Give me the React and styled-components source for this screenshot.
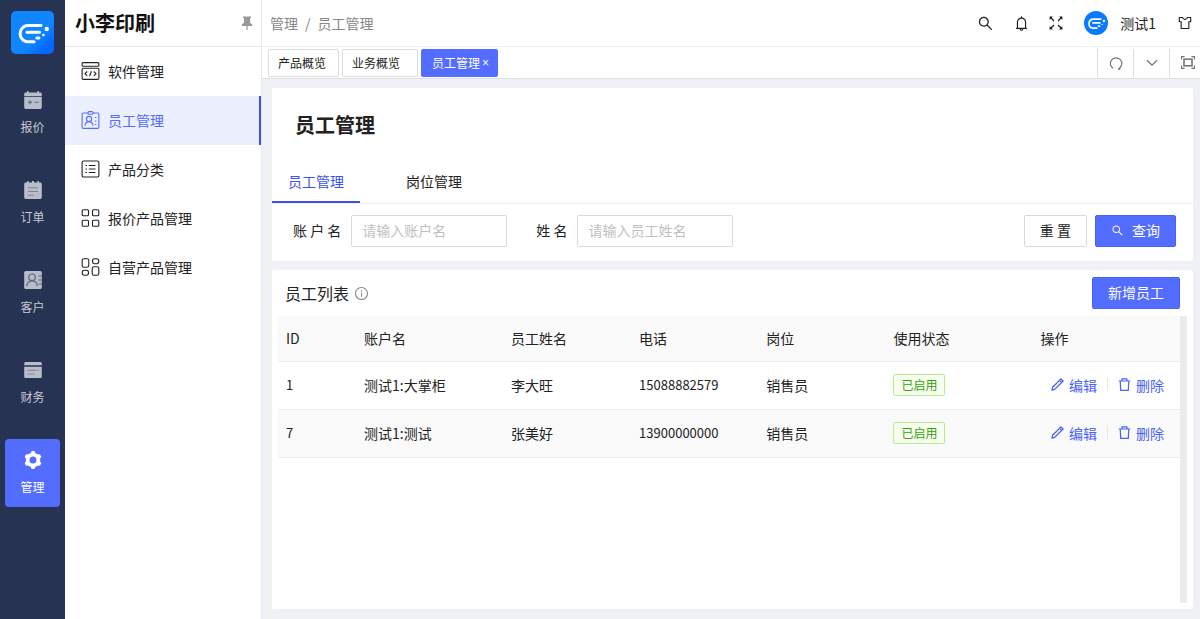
import React, { useState } from 'react';
import styled, { createGlobalStyle } from 'styled-components';
import {
  AiOutlineBell,
  AiOutlineInfoCircle,
  AiOutlineSearch,
  AiOutlineSkin,
} from 'react-icons/ai';

/* ---------- icons ---------- */

const BrandMark = ({ size }) => (
  <svg width={size} height={size} viewBox="0 0 43 43" fill="none" stroke="#fff" strokeLinecap="round">
    <path d="M30 14.6H16a8.2 8.2 0 0 0 0 16.2h7" strokeWidth="3" />
    <path d="M16 21.2h12.5" strokeWidth="3" />
    <path d="M26 27h1.8" strokeWidth="3.2" />
    <circle cx="32.4" cy="24" r="1.3" fill="#fff" stroke="none" />
    <circle cx="35.8" cy="18" r="2.2" fill="#fff" stroke="none" />
  </svg>
);

const QuoteIcon = () => (
  <svg width="20" height="20" viewBox="0 0 20 20" fill="#b9bdc9">
    <path d="M4 1h1.6v1.6h8.8V1H16v1.6h1.2c.9 0 1.6.6 1.6 1.5v1.8H1.2V4.1c0-.9.7-1.5 1.6-1.5H4z" />
    <path d="M1.2 6.7h17.6v10.6c0 .9-.7 1.6-1.6 1.6H2.8c-.9 0-1.6-.7-1.6-1.6z" />
    <path d="M5 12.3h4M7 10.3v4M11.8 12.3h4" stroke="#5c6580" strokeWidth="1.1" />
  </svg>
);

const OrderIcon = () => (
  <svg width="20" height="20" viewBox="0 0 20 20" fill="#b9bdc9">
    <path d="M4 1h1.6v1.4H9V1h2v1.4h3.4V1H16v1.4h1.2c.9 0 1.6.7 1.6 1.6v13.3c0 .9-.7 1.6-1.6 1.6H2.8c-.9 0-1.6-.7-1.6-1.6V4c0-.9.7-1.6 1.6-1.6H4z" />
    <path d="M5 7.7h10M5 11.5h10M5 15.2h6" stroke="#7d859b" strokeWidth="1.1" />
  </svg>
);

const CustomerIcon = () => (
  <svg width="20" height="20" viewBox="0 0 20 20" fill="none">
    <rect x="1.2" y="1" width="17.6" height="18" rx="1.6" fill="#b9bdc9" />
    <circle cx="9" cy="7.3" r="3.3" stroke="#5c6580" strokeWidth="1.2" />
    <path d="M3.8 16.3c0-3.2 2-5.4 5.2-5.4s5.2 2.2 5.2 5.4" stroke="#5c6580" strokeWidth="1.2" />
    <path d="M15.3 6h3.5M15.3 10h3.5M15.3 14h3.5" stroke="#5c6580" strokeWidth="1.1" />
  </svg>
);

const FinanceIcon = () => (
  <svg width="20" height="20" viewBox="0 0 20 20" fill="#b9bdc9">
    <path d="M2.8 2h14.4c.9 0 1.6.7 1.6 1.6v1.6H1.2V3.6C1.2 2.7 1.9 2 2.8 2z" />
    <path d="M1.2 6.8h17.6v9.6c0 .9-.7 1.6-1.6 1.6H2.8c-.9 0-1.6-.7-1.6-1.6z" />
    <path d="M4.7 10.4h8.6M14.5 10.4h1.5M4.7 14h6.8" stroke="#868da1" strokeWidth="1.2" />
  </svg>
);

const GearIcon = () => (
  <svg width="20" height="20" viewBox="0 0 20 20" fill="none" stroke="#fff">
    <circle cx="10" cy="10" r="5.4" strokeWidth="3.8" />
    {[0, 60, 120, 180, 240, 300].map((deg) => (
      <path
        key={deg}
        d="M8.6 3.2 9 1.9h2l.4 1.3z"
        fill="#fff"
        strokeWidth="1.6"
        strokeLinejoin="round"
        transform={`rotate(${deg} 10 10)`}
      />
    ))}
  </svg>
);

const PinIcon = () => (
  <svg width="12" height="15" viewBox="0 0 12 15" fill="#999">
    <path d="M2 .5h8v1.6H9v4.7l2.2 1.6v1.5H6.6V14H5.4V9.9H.8V8.4L3 6.8V2.1H2z" />
  </svg>
);

const SoftwareIcon = () => (
  <MenuSvg viewBox="0 0 18 18">
    <rect x=".6" y=".6" width="16.8" height="3.6" rx="1" />
    <path d="M2 6.2h14a1.4 1.4 0 0 1 1.4 1.4V16a1.4 1.4 0 0 1-1.4 1.4H2A1.4 1.4 0 0 1 .6 16V7.6A1.4 1.4 0 0 1 2 6.2z" />
    <path d="M5.7 9.5 3.5 11.7l2.2 2.2M12.3 9.5l2.2 2.2-2.2 2.2M9.9 9.2l-1.8 5" />
  </MenuSvg>
);

const StaffIcon = () => (
  <MenuSvg viewBox="0 0 18 18">
    <path d="M6.5 2H2A1.4 1.4 0 0 0 .6 3.4V16A1.4 1.4 0 0 0 2 17.4h14a1.4 1.4 0 0 0 1.4-1.4V3.4A1.4 1.4 0 0 0 16 2h-4.5" />
    <rect x="6.5" y=".6" width="5" height="2.6" rx="1" />
    <circle cx="7.5" cy="8" r="2.6" />
    <path d="M3.5 14.8c.2-2.5 1.6-4.2 4-4.2s3.8 1.7 4 4.2" />
    <path d="M13.3 6.5h1.6M13.3 10h1.6M13.3 13.5h1.6" />
  </MenuSvg>
);

const CategoryIcon = () => (
  <MenuSvg viewBox="0 0 18 18">
    <rect x=".6" y="1" width="16.8" height="16" rx="1.5" />
    <path d="M4 5.5h1.5M4 9h1.5M4 12.5h1.5M7.3 5.5H14M7.3 9H14M7.3 12.5H14" />
  </MenuSvg>
);

const GridIcon = () => (
  <MenuSvg viewBox="0 0 18 18">
    <rect x=".7" y=".7" width="6.3" height="6" rx="1" />
    <rect x="11" y=".7" width="6.3" height="6" rx="1" />
    <rect x=".7" y="11.3" width="6.3" height="6" rx="1" />
    <rect x="11" y="11.3" width="6.3" height="6" rx="1" />
  </MenuSvg>
);

const OwnIcon = () => (
  <MenuSvg viewBox="0 0 18 18">
    <rect x=".7" y=".7" width="6.6" height="8.6" rx="1.8" />
    <rect x="11" y=".7" width="6.3" height="5" rx="2.2" />
    <rect x=".7" y="12.3" width="6.3" height="5" rx="2.2" />
    <rect x="10.7" y="8.7" width="6.6" height="8.6" rx="1.8" />
  </MenuSvg>
);

const ShrinkIcon = () => (
  <svg width="14" height="14" viewBox="0 0 14 14" fill="#222" stroke="#222" strokeWidth="1.4">
    <path d="M1.5 1.5 5 5M12.5 1.5 9 5M1.5 12.5 5 9M12.5 12.5 9 9" />
    <path d="M.6.6H4L.6 4zM13.4.6H10L13.4 4zM.6 13.4H4L.6 10zM13.4 13.4H10l3.4-3.4z" stroke="none" />
  </svg>
);

const RefreshIcon = () => (
  <svg width="14" height="14" viewBox="0 0 14 14" fill="none" stroke="#777" strokeWidth="1.2">
    <path d="M4 12.3A5.7 5.7 0 1 1 10.3 12.2" />
    <path d="M9 13h2.4" strokeWidth="1.6" />
  </svg>
);

const DownIcon = () => (
  <svg width="12" height="8" viewBox="0 0 12 8" fill="none" stroke="#777" strokeWidth="1.3">
    <path d="M1 1.2l5 5 5-5" />
  </svg>
);

const FrameIcon = () => (
  <svg width="14" height="13" viewBox="0 0 14 13" fill="none" stroke="#777">
    <rect x="3" y="3.2" width="8" height="6.6" strokeWidth="1.6" />
    <path d="M.6 3.5V.6h3M10.4.6h3v2.9M13.4 9.5v2.9h-3M3.6 12.4h-3V9.5" strokeWidth="1.2" />
  </svg>
);

const PenIcon = () => (
  <svg width="13" height="13" viewBox="0 0 13 13" fill="none" stroke="currentColor" strokeWidth="1.3" strokeLinejoin="round">
    <path d="M1 12l.6-2.8L10 .9 12.1 3l-8.4 8.4zM8.6 2.3l2.1 2.1" />
  </svg>
);

const TrashIcon = () => (
  <svg width="13" height="13" viewBox="0 0 13 13" fill="none" stroke="currentColor" strokeWidth="1.2" strokeLinejoin="round">
    <path d="M.8 3h11.4M4 3V.8h5V3M2.2 3l.5 9.4h7.6l.5-9.4" />
  </svg>
);

/* ---------- data ---------- */

const modules = [
  { label: '报价', icon: <QuoteIcon /> },
  { label: '订单', icon: <OrderIcon /> },
  { label: '客户', icon: <CustomerIcon /> },
  { label: '财务', icon: <FinanceIcon /> },
  { label: '管理', icon: <GearIcon /> },
];

const menus = [
  { label: '软件管理', icon: <SoftwareIcon /> },
  { label: '员工管理', icon: <StaffIcon /> },
  { label: '产品分类', icon: <CategoryIcon /> },
  { label: '报价产品管理', icon: <GridIcon /> },
  { label: '自营产品管理', icon: <OwnIcon /> },
];

const staff = [
  { id: 1, account: '测试1:大掌柜', name: '李大旺', phone: '15088882579', post: '销售员' },
  { id: 7, account: '测试1:测试', name: '张美好', phone: '13900000000', post: '销售员' },
];

const App = () => {
  const [tab, setTab] = useState('员工管理');

  return (
    <Page>
      <GlobalStyle />
      <Rail>
        <Logo><BrandMark size={43} /></Logo>
        {modules.map((m) => (
          <RailItem key={m.label} href="#" $active={m.label === '管理'}>
            {m.icon}
            <span>{m.label}</span>
          </RailItem>
        ))}
      </Rail>

      <Side>
        <SideHeader>
          <Company>小李印刷</Company>
          <PinIcon />
        </SideHeader>
        {menus.map((m) => (
          <MenuItem key={m.label} href="#" $active={m.label === '员工管理'}>
            {m.icon}
            {m.label}
          </MenuItem>
        ))}
      </Side>

      <Main>
        <Header>
          <Crumbs>
            <span>管理</span>
            <span>/</span>
            <span>员工管理</span>
          </Crumbs>
          <HeaderTools>
            <IconButton aria-label="搜索"><AiOutlineSearch size={17} /></IconButton>
            <IconButton aria-label="通知"><AiOutlineBell size={17} /></IconButton>
            <IconButton aria-label="全屏"><ShrinkIcon /></IconButton>
            <User>
              <Avatar><BrandMark size={24} /></Avatar>
              测试1
            </User>
            <IconButton aria-label="主题"><AiOutlineSkin size={16} /></IconButton>
          </HeaderTools>
        </Header>

        <PageTabs>
          <PageTab>产品概览</PageTab>
          <PageTab $wide>业务概览</PageTab>
          <PageTab $active>员工管理<Close>×</Close></PageTab>
          <TabTools>
            <TabTool aria-label="刷新"><RefreshIcon /></TabTool>
            <TabTool aria-label="更多"><DownIcon /></TabTool>
            <TabTool aria-label="内容全屏"><FrameIcon /></TabTool>
          </TabTools>
        </PageTabs>

        <Content>
          <Card>
            <Title>员工管理</Title>
            <Tabs>
              {['员工管理', '岗位管理'].map((t) => (
                <Tab key={t} $active={t === tab} onClick={() => setTab(t)}>{t}</Tab>
              ))}
            </Tabs>
            <Filters>
              <Field>
                <label htmlFor="account">账 户 名</label>
                <Input id="account" placeholder="请输入账户名" />
              </Field>
              <Field>
                <label htmlFor="name">姓 名</label>
                <Input id="name" placeholder="请输入员工姓名" />
              </Field>
              <Actions>
                <Button>重 置</Button>
                <Button $primary><AiOutlineSearch size={13} />查询</Button>
              </Actions>
            </Filters>
          </Card>

          <ListCard>
            <ListHeader>
              <ListTitle>员工列表</ListTitle>
              <AiOutlineInfoCircle size={15} color="#888" />
              <Actions><Button $primary>新增员工</Button></Actions>
            </ListHeader>
            <TableArea>
              <div>
                <Table>
                  <colgroup>
                    <Col $width="78px" />
                    <Col $width="16.3%" />
                    <Col $width="14.2%" />
                    <Col $width="14.1%" />
                    <Col $width="14.1%" />
                    <Col $width="16.3%" />
                    <Col />
                  </colgroup>
                  <thead>
                    <tr>
                      <th>ID</th>
                      <th>账户名</th>
                      <th>员工姓名</th>
                      <th>电话</th>
                      <th>岗位</th>
                      <th>使用状态</th>
                      <th>操作</th>
                    </tr>
                  </thead>
                  <tbody>
                    {staff.map((s) => (
                      <tr key={s.id}>
                        <NumberCell>{s.id}</NumberCell>
                        <td>{s.account}</td>
                        <td>{s.name}</td>
                        <NumberCell>{s.phone}</NumberCell>
                        <td>{s.post}</td>
                        <td><Tag>已启用</Tag></td>
                        <td>
                          <RowActions>
                            <RowLink href="#"><PenIcon />编辑</RowLink>
                            <Divider />
                            <RowLink href="#"><TrashIcon />删除</RowLink>
                          </RowActions>
                        </td>
                      </tr>
                    ))}
                  </tbody>
                </Table>
              </div>
              <Track />
            </TableArea>
          </ListCard>
        </Content>
      </Main>
    </Page>
  );
};

/* ---------- styles ---------- */

const GlobalStyle = createGlobalStyle`
  * { box-sizing: border-box; }
  body {
    margin: 0;
    color: #222;
    font: 14px/20px "Noto Sans CJK SC", sans-serif;
  }
  button, input { font: inherit; color: inherit; }
  button { cursor: pointer; }
  a { color: inherit; text-decoration: none; }
  svg { flex: none; }
`;

const Page = styled.div`
  display: flex;
  min-height: 100vh;
  overflow: hidden;
`;

const Rail = styled.nav`
  display: flex;
  flex-direction: column;
  flex: none;
  gap: 22px;
  width: 65px;
  padding: 11px 5px;
  background: #273352;
`;

const Logo = styled.div`
  width: 43px;
  height: 43px;
  margin: 0 6px 3px;
  border-radius: 5px;
  background: linear-gradient(135deg, #0f85ff 0 60%, #0567ff 85%);
`;

const RailItem = styled.a`
  display: flex;
  flex-direction: column;
  align-items: center;
  gap: 7px;
  height: 68px;
  padding-top: 11px;
  border-radius: 4px;
  font-size: 12px;
  color: ${(p) => (p.$active ? '#fff' : '#c6cad3')};
  background: ${(p) => (p.$active ? '#526dff' : 'transparent')};
`;

const Side = styled.aside`
  flex: none;
  width: 197px;
  background: #fff;
  border-right: 1px solid #e8eaef;
`;

const SideHeader = styled.div`
  display: flex;
  align-items: center;
  justify-content: space-between;
  height: 47px;
  padding: 0 8px 0 10px;
  border-bottom: 1px solid #e8e8e8;
`;

const Company = styled.strong`
  font-size: 20px;
  line-height: 28px;
  font-weight: 700;
  color: #111;
`;

const MenuItem = styled.a`
  display: flex;
  align-items: center;
  gap: 8px;
  height: 49px;
  padding: 0 0 2px 16px;
  color: ${(p) => (p.$active ? '#526dff' : '#222')};
  background: ${(p) => (p.$active ? '#eceffe' : 'transparent')};
  border-right: 2px solid ${(p) => (p.$active ? '#3c50f5' : 'transparent')};
`;

const MenuSvg = styled.svg`
  width: 19px;
  height: 18px;
  fill: none;
  stroke: currentColor;
  stroke-width: 1.1;
`;

const Main = styled.main`
  display: flex;
  flex-direction: column;
  flex: 1;
  min-width: 0;
  background: #f0f1f5;
`;

const Header = styled.header`
  display: flex;
  align-items: center;
  justify-content: space-between;
  height: 47px;
  padding: 0 7px 0 8px;
  background: #fff;
  border-bottom: 1px solid #eee;
`;

const Crumbs = styled.div`
  display: flex;
  gap: 7px;
  color: #888;
`;

const HeaderTools = styled.div`
  display: flex;
  align-items: center;
  gap: 19px;
`;

const IconButton = styled.button`
  display: flex;
  padding: 0;
  border: 0;
  background: none;
`;

const User = styled.div`
  display: flex;
  align-items: center;
  gap: 12px;
  margin: 0 2px;
`;

const Avatar = styled.span`
  display: flex;
  width: 24px;
  height: 24px;
  border-radius: 50%;
  background: #0a78ff;
`;

const PageTabs = styled.div`
  display: flex;
  align-items: center;
  gap: 3px;
  height: 32px;
  padding-left: 6px;
  background: #fff;
  border-bottom: 1px solid #dcdee3;
`;

const PageTab = styled.button`
  display: flex;
  align-items: center;
  gap: 2px;
  height: 28px;
  padding: 0 ${(p) => (p.$wide ? 17 : p.$active ? 8 : 12)}px 0 ${(p) => (p.$active ? 10 : 9)}px;
  border: 1px solid ${(p) => (p.$active ? '#526dff' : '#dcdcdc')};
  border-radius: 2px;
  font-size: 12px;
  color: ${(p) => (p.$active ? '#fff' : '#222')};
  background: ${(p) => (p.$active ? '#526dff' : '#fff')};
`;

const Close = styled.span`
  font-family: "Liberation Sans", sans-serif;
  font-size: 12px;
`;

const TabTools = styled.div`
  display: flex;
  margin: 0 -5px 0 auto;
`;

const TabTool = styled.button`
  display: flex;
  align-items: center;
  justify-content: center;
  width: 36px;
  height: 28px;
  padding: 0;
  border: 0;
  border-left: 1px solid #dcdcdc;
  background: none;
`;

const Content = styled.div`
  display: flex;
  flex-direction: column;
  flex: 1;
  gap: 9px;
  padding: 9px 7px 10px 10px;
`;

const Card = styled.section`
  background: #fff;
  border-radius: 2px;
`;

const Title = styled.h1`
  margin: 0;
  padding: 23px 23px 21px;
  font-size: 20px;
  line-height: 28px;
  font-weight: 700;
`;

const Tabs = styled.div`
  display: flex;
  gap: 30px;
  border-bottom: 1px solid #f0f0f0;
`;

const Tab = styled.button`
  height: 43px;
  padding: 0 16px;
  border: 0;
  border-bottom: 2px solid ${(p) => (p.$active ? '#3c50f5' : 'transparent')};
  color: ${(p) => (p.$active ? '#3c50f5' : '#222')};
  background: none;
`;

const Filters = styled.div`
  display: flex;
  align-items: center;
  gap: 29px;
  padding: 11px 17px 14px 21px;
`;

const Field = styled.div`
  display: flex;
  align-items: center;
  gap: 10px;
  label { padding-bottom: 2px; }
`;

const Input = styled.input`
  width: 156px;
  height: 32px;
  padding: 0 10px 2px;
  border: 1px solid #d9d9d9;
  border-radius: 2px;
  outline: 0;
  &::placeholder { color: #bfbfbf; }
`;

const Actions = styled.div`
  display: flex;
  gap: 8px;
  margin-left: auto;
`;

const Button = styled.button`
  display: flex;
  align-items: center;
  gap: 8px;
  height: 32px;
  padding: 0 15px 2px;
  border: 1px solid ${(p) => (p.$primary ? '#4660ff' : '#d9d9d9')};
  border-radius: 2px;
  color: ${(p) => (p.$primary ? '#fff' : '#222')};
  background: ${(p) => (p.$primary ? '#526dff' : '#fff')};
`;

const ListCard = styled(Card)`
  display: flex;
  flex-direction: column;
  flex: 1;
  padding: 7px 6px 6px;
`;

const ListHeader = styled.div`
  display: flex;
  align-items: center;
  gap: 5px;
  padding: 0 7px 7px;
`;

const ListTitle = styled.h2`
  margin: 0;
  font-size: 16px;
  line-height: 24px;
  font-weight: 400;
`;

const TableArea = styled.div`
  display: grid;
  grid-template-columns: 1fr 7px;
  flex: 1;
`;

const Track = styled.div`
  background: #ebebeb;
`;

const Col = styled.col`
  width: ${(p) => p.$width || 'auto'};
`;

const Table = styled.table`
  width: 100%;
  table-layout: fixed;
  border-collapse: separate;
  border-spacing: 0;
  th, td {
    height: 48px;
    padding: 0 8px 2px;
    border-bottom: 1px solid #ededed;
    font-weight: 400;
    text-align: left;
  }
  th {
    height: 46px;
    background: #fafafa;
  }
  tbody tr:nth-child(even) { background: #fafafa; }
`;

const NumberCell = styled.td`
  font-size: 13px;
`;

const Tag = styled.span`
  display: inline-block;
  padding: 0 7px;
  border: 1px solid #b7eb8f;
  border-radius: 2px;
  font-size: 12px;
  color: #389e0d;
  background: #f6ffed;
`;

const RowActions = styled.div`
  display: flex;
  align-items: center;
  justify-content: flex-end;
  gap: 10px;
  padding-right: 8px;
`;

const RowLink = styled.a`
  display: flex;
  align-items: center;
  gap: 5px;
  color: #4a60fa;
`;

const Divider = styled.span`
  width: 1px;
  height: 13px;
  background: #e8e8e8;
`;

export default App;
